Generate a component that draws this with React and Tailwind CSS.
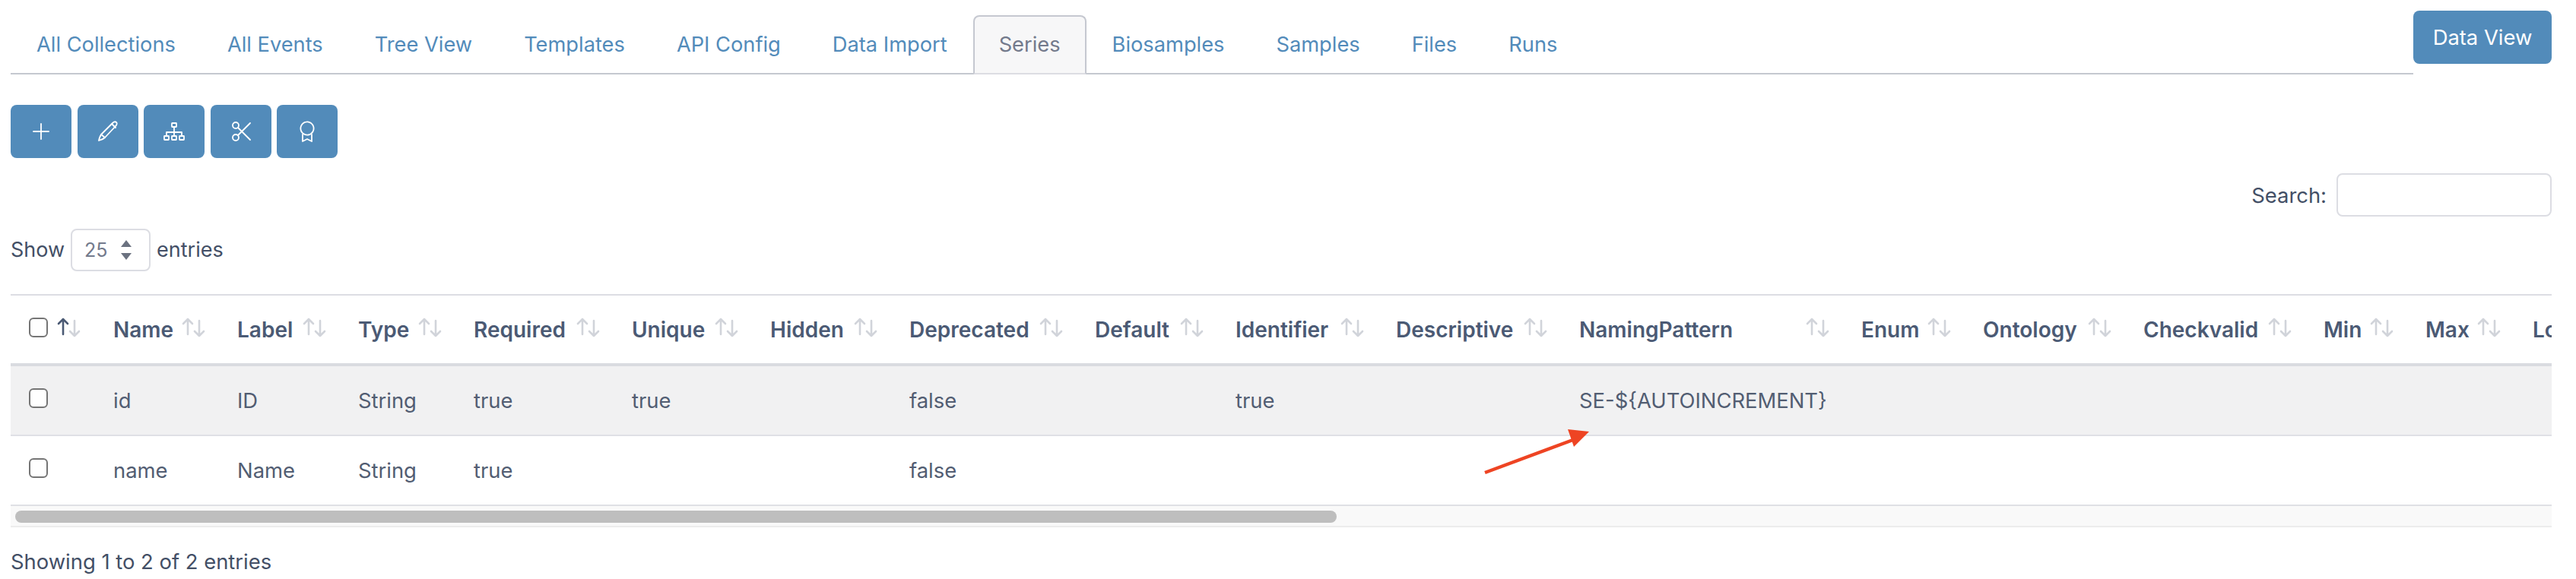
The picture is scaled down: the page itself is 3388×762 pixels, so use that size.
import React from 'react';

const tabs = [
  { label: 'All Collections' },
  { label: 'All Events' },
  { label: 'Tree View' },
  { label: 'Templates' },
  { label: 'API Config' },
  { label: 'Data Import' },
  { label: 'Series', active: true },
  { label: 'Biosamples' },
  { label: 'Samples' },
  { label: 'Files' },
  { label: 'Runs' },
];

const columns = [
  { label: 'Name', w: 'w-[163px]' },
  { label: 'Label', w: 'w-[159px]' },
  { label: 'Type', w: 'w-[152px]' },
  { label: 'Required', w: 'w-[208px]' },
  { label: 'Unique', w: 'w-[182px]' },
  { label: 'Hidden', w: 'w-[183px]' },
  { label: 'Deprecated', w: 'w-[244px]' },
  { label: 'Default', w: 'w-[185px]' },
  { label: 'Identifier', w: 'w-[211px]' },
  { label: 'Descriptive', w: 'w-[241px]' },
  { label: 'NamingPattern', w: 'w-[371px]' },
  { label: 'Enum', w: 'w-[160px]' },
  { label: 'Ontology', w: 'w-[211px]' },
  { label: 'Checkvalid', w: 'w-[237px]' },
  { label: 'Min', w: 'w-[134px]' },
  { label: 'Max', w: 'w-[141px]' },
  { label: 'Lookup', w: 'w-[200px]' },
];

const rows = [
  ['id', 'ID', 'String', 'true', 'true', '', 'false', '', 'true', '', 'SE-${AUTOINCREMENT}', '', '', '', '', '', ''],
  ['name', 'Name', 'String', 'true', '', '', 'false', '', '', '', '', '', '', '', '', '', ''],
];

function SortIcon({ active }) {
  return (
    <svg width="34" height="26" viewBox="0 0 34 26" fill="none" strokeWidth="2.6" strokeLinecap="round" strokeLinejoin="round" className="shrink-0">
      <path d="M9 22V2M3 8l6-6 6 6" stroke={active ? '#4b5a74' : '#d1d4da'} />
      <path d="M24 4v20M18 18l6 6 6-6" stroke="#d1d4da" />
    </svg>
  );
}

function ToolButton({ children }) {
  return (
    <button className="w-20 h-[70px] rounded-lg bg-[#528bba] flex items-center justify-center">
      {children}
    </button>
  );
}

const iconProps = { fill: 'none', stroke: 'white', strokeWidth: 1.8, strokeLinecap: 'round', strokeLinejoin: 'round' };

export default function App() {
  return (
    <div className="relative w-[3388px] h-[762px] overflow-hidden bg-white pl-[14px] pr-[32px] pt-[14px] text-[27.4px] leading-[40px] text-[#434f66] font-['Inter',sans-serif]">
      <div className="flex items-start">
        <ul className="flex-1 flex pt-[6px] h-[84px] border-b-2 border-[#c5c8d0] text-[27.25px]">
          {tabs.map((t) => (
            <li
              key={t.label}
              className={
                t.active
                  ? 'h-[78px] px-8 flex items-center border-2 border-[#c5c8d0] border-b-[#dcdde3] rounded-t-lg bg-[#f7f7f8] text-[#737a8c]'
                  : 'h-[78px] px-8 flex items-center border-2 border-transparent text-[#528bba]'
              }
            >
              {t.label}
            </li>
          ))}
        </ul>
        <button className="w-[182px] h-[70px] rounded-lg bg-[#528bba] text-white">Data View</button>
      </div>

      <div className="flex gap-[7.5px] mt-[40px]">
        <ToolButton>
          <svg width="22" height="22" viewBox="0 0 22 22" {...iconProps}><path d="M11 1v20M1 11h20" /></svg>
        </ToolButton>
        <ToolButton>
          <svg width="28" height="28" viewBox="0 0 28 28" {...iconProps}>
            <path d="M2 26c1-5 2-7 4-9L20 3c2-2 4-2 5-1s1 3-1 5L10 22c-2 2-4 3-8 4z" />
            <path d="M19 4l5 5M5 18l5 4" />
          </svg>
        </ToolButton>
        <ToolButton>
          <svg width="28" height="24" viewBox="0 0 28 24" {...iconProps}>
            <rect x="11" y="1" width="6" height="5" rx="0.5" />
            <rect x="1" y="18" width="6" height="5" rx="0.5" />
            <rect x="11" y="18" width="6" height="5" rx="0.5" />
            <rect x="21" y="18" width="6" height="5" rx="0.5" />
            <path d="M14 6v12M4 18v-5h20v5" />
          </svg>
        </ToolButton>
        <ToolButton>
          <svg width="26" height="28" viewBox="0 0 26 28" {...iconProps}>
            <circle cx="6" cy="6" r="4" />
            <circle cx="6" cy="22" r="4" />
            <path d="M9 9l16 16M9 19L25 3" />
          </svg>
        </ToolButton>
        <ToolButton>
          <svg width="22" height="28" viewBox="0 0 22 28" {...iconProps}>
            <circle cx="11" cy="10" r="8.6" strokeDasharray="3.6 0.6" />
            <path d="M5 18v9l6-3 6 3v-9" />
          </svg>
        </ToolButton>
      </div>

      <div className="flex justify-end items-center gap-[13px] mt-[20px] h-[57px]">
        <span>Search:</span>
        <input className="w-[283px] h-[57px] rounded-lg border-2 border-[#dcdde3] bg-white" />
      </div>

      <div className="flex items-center gap-[8px] mt-[16px] h-[56px] text-[27px]">
        <span>Show</span>
        <div className="w-[105px] h-[56px] rounded-lg border-2 border-[#dcdde3] flex items-center justify-between pl-4 pr-[22px] text-[#737a8c] text-[25px]">
          <span>25</span>
          <svg width="16" height="26" viewBox="0 0 16 26" fill="#6b7280">
            <path d="M8 0l7 9H1zM8 26l-7-9h14z" />
          </svg>
        </div>
        <span>entries</span>
      </div>

      <div className="mt-[30px] overflow-hidden border-t-2 border-[#dcdde3]">
        <table className="table-fixed border-separate border-spacing-0 w-[3493px]">
          <thead>
            <tr>
              <th className="w-[111px] h-[93px] pl-6 border-b-4 border-[#d9dbe0] text-left font-normal">
                <div className="flex items-center">
                  <input type="checkbox" className="appearance-none block w-[25px] h-[26px] rounded-md border-2 border-[#757575] bg-white mb-[6px]" />
                  <span className="ml-[11px] mb-[6px]"><SortIcon active /></span>
                </div>
              </th>
              {columns.map((c) => (
                <th key={c.label} className={`${c.w} h-[93px] pl-6 pr-4 border-b-4 border-[#d9dbe0] text-left font-semibold text-[#4b5a74] text-[28px] whitespace-nowrap`}>
                  <div className="flex items-center justify-between">
                    <span>{c.label}</span>
                    <span className="mb-[6px]"><SortIcon /></span>
                  </div>
                </th>
              ))}
            </tr>
          </thead>
          <tbody>
            {rows.map((row, i) => (
              <tr key={i} className={i === 0 ? 'bg-[#f1f1f2]' : 'bg-white'}>
                <td className="h-[92px] pl-6 border-b-2 border-[#dfe0e5]">
                  <input type="checkbox" className="appearance-none block w-[25px] h-[26px] rounded-md border-2 border-[#757575] bg-white mb-[6px]" />
                </td>
                {row.map((v, j) => (
                  <td key={j} className="h-[92px] pl-6 border-b-2 border-[#dfe0e5] text-[#525d72] whitespace-nowrap">{v}</td>
                ))}
              </tr>
            ))}
          </tbody>
        </table>
      </div>

      <div className="h-7 bg-[#f9f9f9] border-b-2 border-[#ececec] pt-[6px] pl-[6px]">
        <div className="w-[1738px] h-4 rounded-lg bg-[#bebebe]"></div>
      </div>

      <div className="mt-[25px]">Showing 1 to 2 of 2 entries</div>

      {/* annotation arrow on top of the table */}
      <svg className="absolute left-[1940px] top-[555px]" width="160" height="80" viewBox="1940 555 160 80">
        <path d="M1953 622L2074 577" stroke="#ee4423" strokeWidth="4.5" />
        <path d="M2062 565L2090 568L2070 588z" fill="#ee4423" />
      </svg>
    </div>
  );
}
